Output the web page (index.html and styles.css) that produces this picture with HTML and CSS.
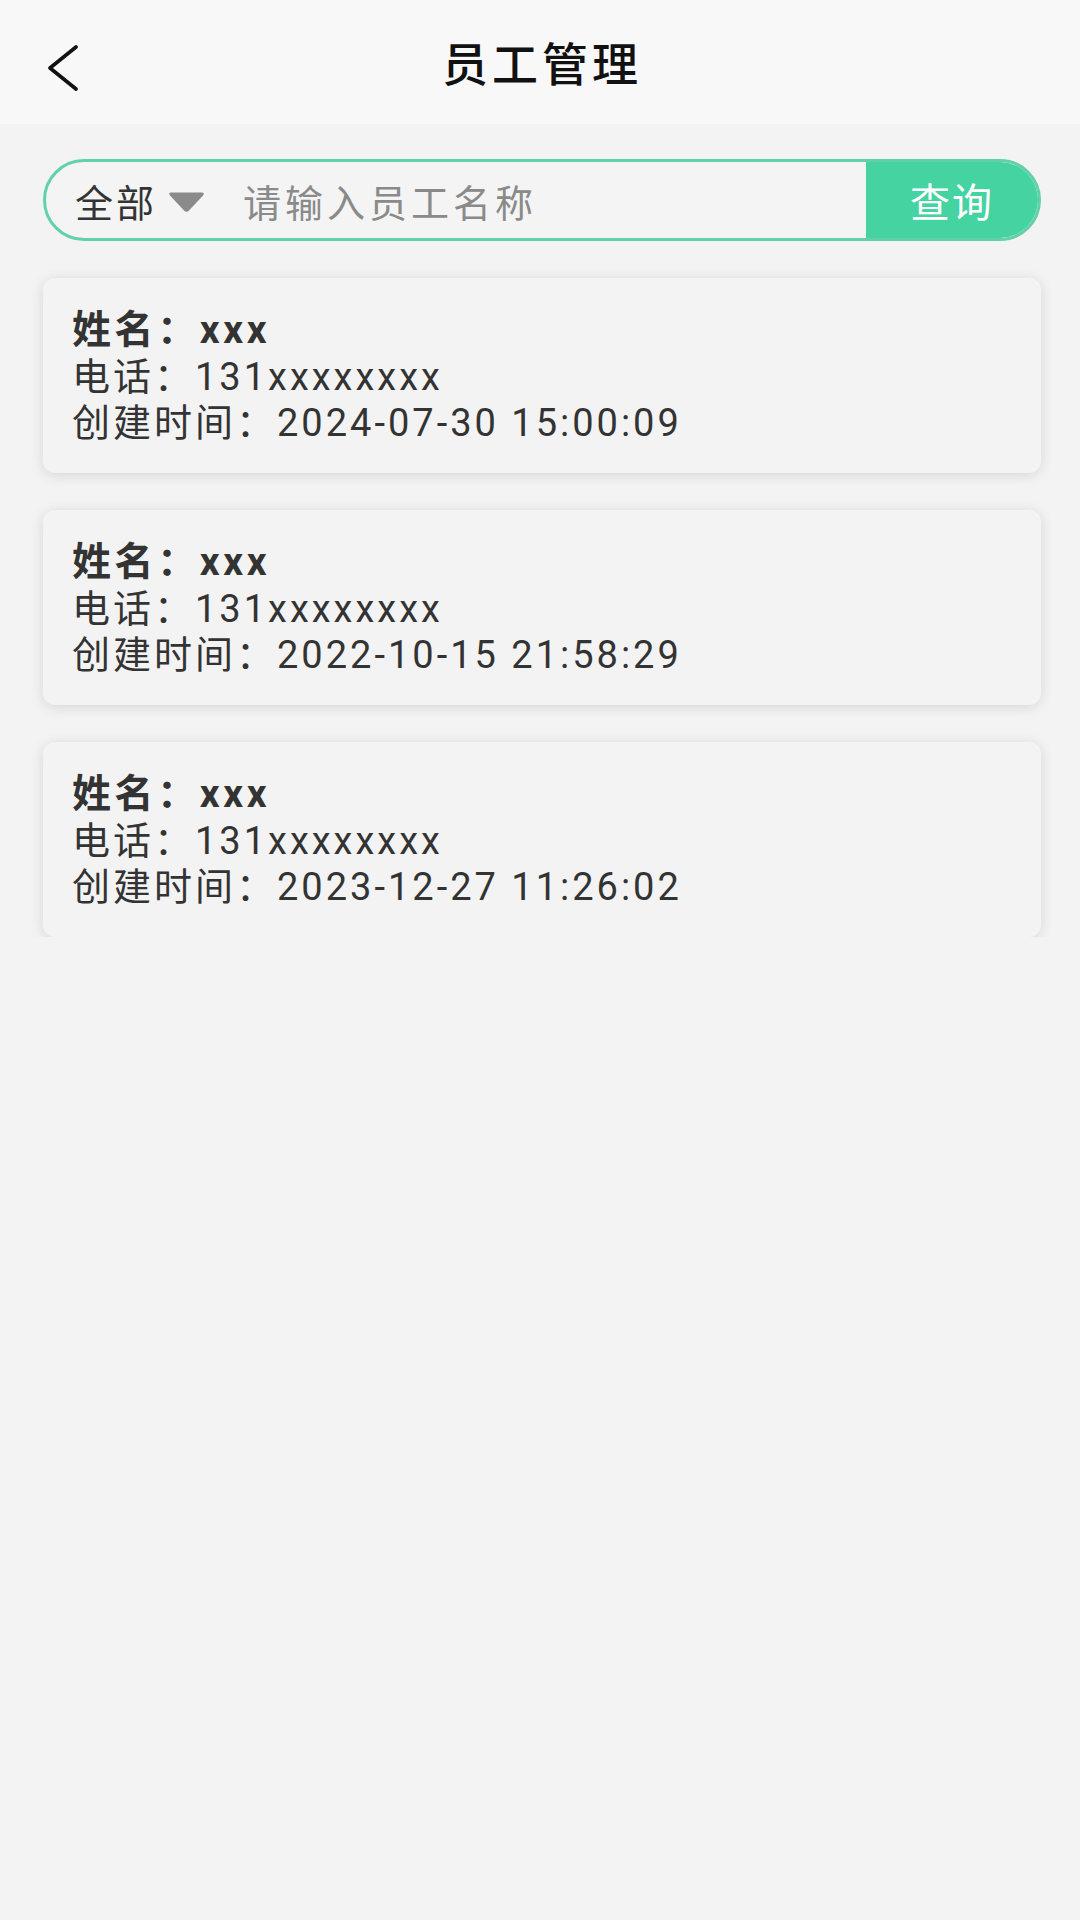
FILE: index.html
```html
<!DOCTYPE html>
<html lang="zh-CN">
  <head>
    <meta charset="UTF-8" />
    <title>员工管理</title>
    <link rel="stylesheet" href="styles.css">
  </head>

  <body>
    <div class="header">
      <div class="back">
        <svg width="32" height="48" viewBox="0 0 32 48">
          <polyline points="28,3 2,24 28,45" fill="none" stroke="#111" stroke-width="3.6" stroke-linecap="round" stroke-linejoin="round" />
        </svg>
      </div>
      <div class="title">员工管理</div>
      <div></div>
    </div>

    <div class="main">
      <div class="search">
        <div class="select">
          <span>全部</span>
          <svg class="arrow" width="37" height="22" viewBox="0 0 37 22">
            <path d="M3 1.5 H34 Q37 1.5 35 4.5 L21 19.5 Q18.5 22 16 19.5 L2 4.5 Q0 1.5 3 1.5 Z" fill="#8a8a8a" />
          </svg>
        </div>
        <div class="input">请输入员工名称</div>
        <div class="btn">查询</div>
      </div>

      <div class="list">
        <div class="card">
          <div class="name">姓名：xxx</div>
          <div class="line">电话：131xxxxxxxx</div>
          <div class="line">创建时间：2024-07-30 15:00:09</div>
        </div>

        <div class="card">
          <div class="name">姓名：xxx</div>
          <div class="line">电话：131xxxxxxxx</div>
          <div class="line">创建时间：2022-10-15 21:58:29</div>
        </div>

        <div class="card">
          <div class="name">姓名：xxx</div>
          <div class="line">电话：131xxxxxxxx</div>
          <div class="line">创建时间：2023-12-27 11:26:02</div>
        </div>
      </div>
    </div>
  </body>
</html>
```

FILE: styles.css
```css
body {
  margin: 0;
  background-color: #f3f3f3;
  font-family: "Noto Sans", "Noto Sans CJK SC", sans-serif;
  color: #333;
}

.header {
  height: 124px;
  background-color: #f8f8f8;
  display: grid;
  grid-template-columns: 1fr auto 1fr;
  align-items: center;
}

.back {
  padding-left: 48px;
  display: flex;
  align-items: center;
  padding-top: 12px;
}

.title {
  font-size: 46px;
  font-weight: 500;
  letter-spacing: 4px;
  margin-right: -4px;
  color: #111;
  padding-bottom: 2px;
}

.main {
  padding: 35px 39px 0 43px;
}

.search {
  height: 76px;
  border: 3px solid #62d0a8;
  border-radius: 41px;
  overflow: hidden;
  display: flex;
  align-items: center;
  background-color: #f4f4f4;
}

.select {
  display: flex;
  align-items: center;
  padding-left: 29px;
  font-size: 38px;
  letter-spacing: 3px;
  color: #333;
}

.arrow {
  margin-left: 11px;
  margin-top: 4px;
}

.input {
  flex: 1;
  padding-left: 38px;
  font-size: 38px;
  letter-spacing: 4px;
  color: #8a8a8a;
}

.btn {
  width: 172px;
  height: 100%;
  background-color: #45d3a1;
  color: #fff;
  font-size: 40px;
  letter-spacing: 2px;
  display: flex;
  align-items: center;
  justify-content: center;
}

.list {
  padding-top: 37px;
  display: flex;
  flex-direction: column;
  gap: 37px;
}

.card {
  height: 140px;
  padding: 29px 29px 26px;
  background-color: #f3f3f3;
  border-radius: 12px;
  box-shadow: 0 2px 14px rgba(0, 0, 0, 0.12);
  font-family: Roboto, "Noto Sans CJK SC", sans-serif;
  font-size: 38px;
  letter-spacing: 3px;
  line-height: 46.5px;
}

.name {
  font-weight: bold;
  font-size: 39px;
  letter-spacing: 3.6px;
}
```
